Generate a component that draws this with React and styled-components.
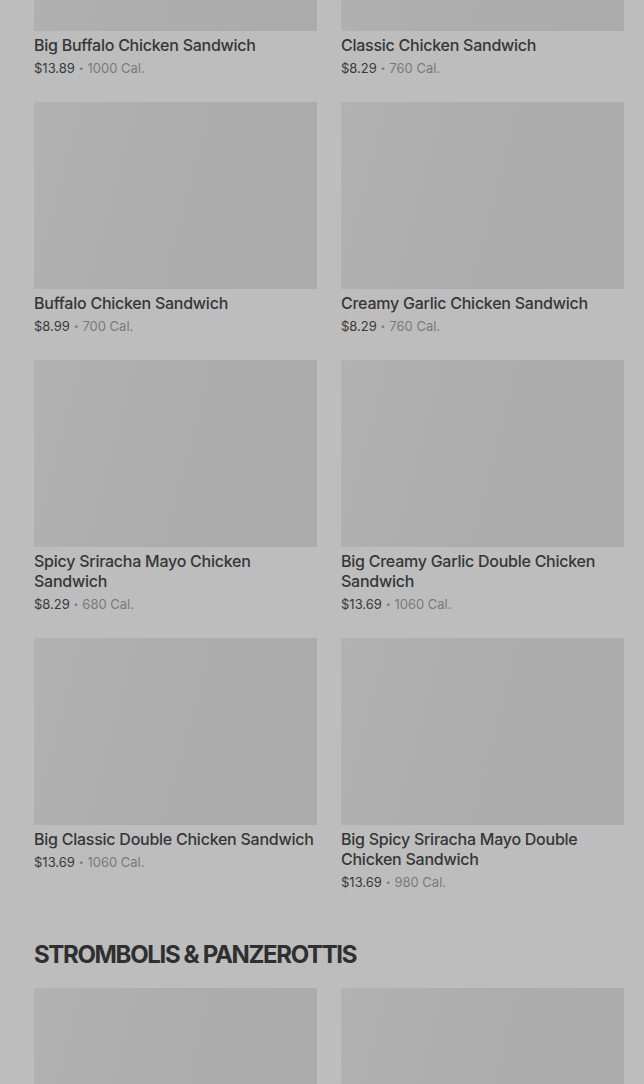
import React from 'react';
import styled, { createGlobalStyle } from 'styled-components';

const GlobalStyle = createGlobalStyle`
  html, body {
    margin: 0;
    padding: 0;
    background: #bdbdbd;
    overflow: hidden;
  }
  body {
    font-family: Inter, "Noto Sans", "Liberation Sans", sans-serif;
    -webkit-font-smoothing: antialiased;
  }
`;

const Page = styled.div`
  width: 644px;
  height: 1084px;
  overflow: hidden;
  background: #bdbdbd;
`;

const Menu = styled.div`
  display: flex;
  flex-direction: column;
  gap: 49px;
  padding: 0 20px 0 34px;
  margin-top: -156px;
`;

const Section = styled.section`
  display: flex;
  flex-direction: column;
`;

const Heading = styled.h2`
  margin: 0 0 19px;
  font-family: Inter, "Liberation Sans", sans-serif;
  font-size: 24px;
  line-height: 28px;
  font-weight: 700;
  letter-spacing: -1.35px;
  color: #2f2f2f;
  text-transform: uppercase;
`;

const Grid = styled.div`
  display: grid;
  grid-template-columns: 283px 283px;
  column-gap: 24px;
  row-gap: 24px;
  align-items: start;
`;

const Card = styled.div`
  display: flex;
  flex-direction: column;
`;

const Thumb = styled.div`
  height: 187px;
  background: linear-gradient(105deg, #b2b2b2 0%, #adadad 45%, #ababab 100%);
`;

const Name = styled.div`
  margin-top: 4px;
  font-size: 16px;
  line-height: 20px;
  font-weight: 500;
  color: #363636;
  letter-spacing: -0.25px;
`;

const Meta = styled.div`
  margin-top: 3px;
  font-size: 13px;
  line-height: 20px;
  color: #7a7a7a;
  display: flex;
  align-items: center;
  gap: 4px;
`;

const Price = styled.span`
  color: #3a3a3a;
`;

const Dot = styled.span`
  font-size: 8px;
  color: #7a7a7a;
`;

const sandwiches = [
  { name: 'Big Buffalo Chicken Sandwich', price: '$13.89', cal: '1000 Cal.' },
  { name: 'Classic Chicken Sandwich', price: '$8.29', cal: '760 Cal.' },
  { name: 'Buffalo Chicken Sandwich', price: '$8.99', cal: '700 Cal.' },
  { name: 'Creamy Garlic Chicken Sandwich', price: '$8.29', cal: '760 Cal.' },
  { name: 'Spicy Sriracha Mayo Chicken Sandwich', price: '$8.29', cal: '680 Cal.' },
  { name: 'Big Creamy Garlic Double Chicken Sandwich', price: '$13.69', cal: '1060 Cal.' },
  { name: 'Big Classic Double Chicken Sandwich', price: '$13.69', cal: '1060 Cal.' },
  { name: 'Big Spicy Sriracha Mayo Double Chicken Sandwich', price: '$13.69', cal: '980 Cal.' },
];

// only the photos of this section are in view
const strombolis = [{ id: 's1' }, { id: 's2' }];

const ItemCard = ({ item }) => (
  <Card>
    <Thumb />
    {item.name && (
      <>
        <Name>{item.name}</Name>
        <Meta>
          <Price>{item.price}</Price>
          <Dot>•</Dot>
          <span>{item.cal}</span>
        </Meta>
      </>
    )}
  </Card>
);

export default function App() {
  return (
    <Page>
      <GlobalStyle />
      <Menu>
        <Section>
          <Grid>
            {sandwiches.map((item) => (
              <ItemCard key={item.name} item={item} />
            ))}
          </Grid>
        </Section>
        <Section>
          <Heading>Strombolis &amp; Panzerottis</Heading>
          <Grid>
            {strombolis.map((item) => (
              <ItemCard key={item.id} item={item} />
            ))}
          </Grid>
        </Section>
      </Menu>
    </Page>
  );
}
